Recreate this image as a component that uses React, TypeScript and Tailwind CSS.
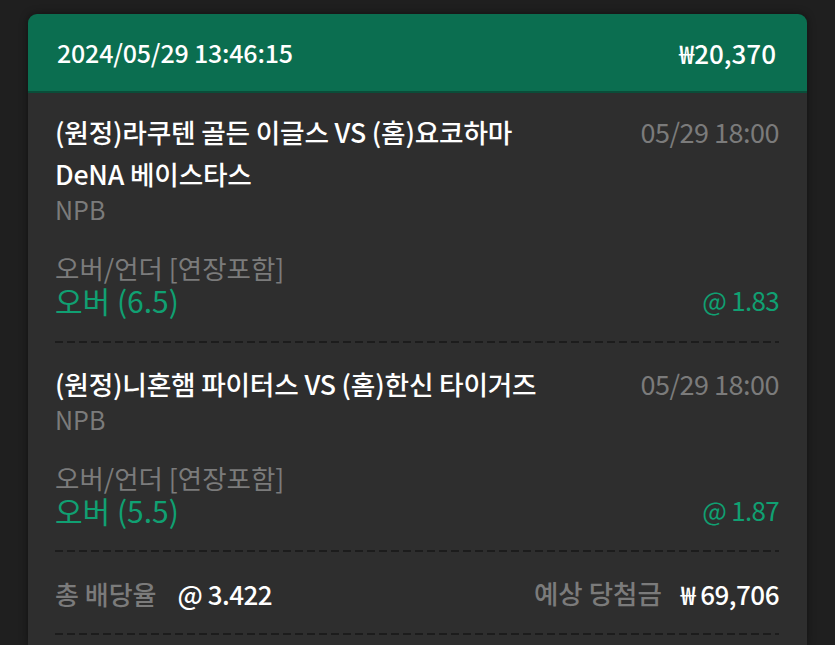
const FONT = '[font-family:"Noto_Sans_CJK_KR","Noto_Sans",sans-serif]'

const BETS = [
  {
    title: '(원정)라쿠텐 골든 이글스 VS (홈)요코하마 DeNA 베이스타스',
    league: 'NPB',
    time: '05/29 18:00',
    market: '오버/언더 [연장포함]',
    pick: '오버 (6.5)',
    odds: '1.83',
  },
  {
    title: '(원정)니혼햄 파이터스 VS (홈)한신 타이거즈',
    league: 'NPB',
    time: '05/29 18:00',
    market: '오버/언더 [연장포함]',
    pick: '오버 (5.5)',
    odds: '1.87',
  },
]

function Dashed() {
  return <div className="h-[2px] w-full bg-[repeating-linear-gradient(90deg,#1c1c1c_0_8px,transparent_8px_12px)]" />
}

export default function App() {
  return (
    <div className={`min-h-screen bg-[#1f1f1f] pt-[14px] px-[28px] ${FONT}`}>
      <div className="rounded-t-[9px] overflow-hidden shadow-[0_0_8px_rgba(0,0,0,0.45)]">
        <div className="h-[79px] bg-[#0b6e50] border-b-2 border-[#0a4d39] flex items-center justify-between pl-[29px] pr-[31px]">
          <span className="text-white text-[25px] font-medium tracking-[-0.2px]">2024/05/29 13:46:15</span>
          <span className="text-white text-[26px] font-medium">₩20,370</span>
        </div>

        <div className="bg-[#2e2e2e] pl-[27px] pr-[28px] pt-[18px] pb-[10px]">
          {BETS.map((b, i) => (
            <div key={i}>
              <div className={i === 0 ? '' : 'pt-[20px]'}>
                <div className="flex justify-between items-start">
                  <p className="text-white text-[26.7px] font-medium leading-[42px] w-[510px] tracking-[-0.2px]">{b.title}</p>
                  <span className="text-[#7b7b7b] text-[27px] leading-[42px] tracking-[-0.5px]">{b.time}</span>
                </div>
                <p className="text-[#7b7b7b] text-[25px] leading-[28px]">{b.league}</p>
                <p className="mt-[29px] text-[#7b7b7b] text-[26.5px] leading-[32px]">{b.market}</p>
                <div className="flex justify-between items-center h-[32px]">
                  <span className="text-[#10a072] text-[30px] leading-[32px]">{b.pick}</span>
                  <span className="text-[#10a072] text-[26px] leading-[32px] tracking-[-0.7px]">@ {b.odds}</span>
                </div>
              </div>
              <div className={i === 0 ? 'mt-[25px]' : 'mt-[24px]'}>
                <Dashed />
              </div>
            </div>
          ))}

          <div className="mt-[21px] h-[40px] flex items-center justify-between">
            <div className="flex items-center gap-[21px]">
              <span className="text-[#7b7b7b] text-[26px] font-medium">총 배당율</span>
              <span className="text-white text-[26px] font-medium tracking-[-0.5px]">@ 3.422</span>
            </div>
            <div className="flex items-center gap-[19px]">
              <span className="text-[#7b7b7b] text-[26.5px] font-medium">예상 당첨금</span>
              <span className="text-white text-[26px] font-medium tracking-[-0.5px]">
                <span className="mr-[5px]">₩</span>69,706
              </span>
            </div>
          </div>
          <div className="mt-[20px]">
            <Dashed />
          </div>
        </div>
      </div>
    </div>
  )
}
